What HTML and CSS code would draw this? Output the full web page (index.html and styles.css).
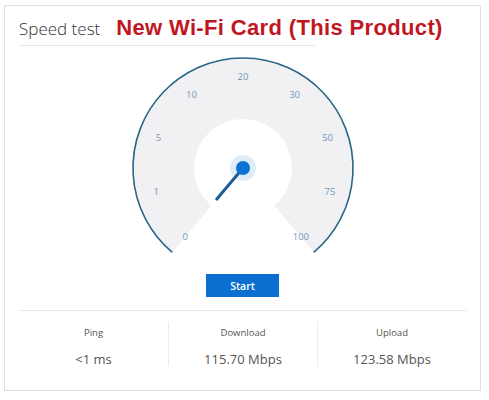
FILE: index.html
```html
<!DOCTYPE html>
<html>
<head>
<meta charset="utf-8">
<link rel="stylesheet" href="styles.css">
</head>
<body>
<div class="card">
  <div class="header">
    <span class="title">Speed test</span>
    <span class="tag">New Wi-Fi Card (This Product)</span>
  </div>
  <div class="rule"></div>
  <div class="gauge">
    <svg width="240" height="210" viewBox="0 0 240 210">
      <path d="M49.94 201.5 A109 109 0 1 1 190.06 201.5 L151.5 155.53 A49 49 0 1 0 88.5 155.53 Z" fill="#f1f0f3"/>
      <path d="M49.3 202.3 A110 110 0 1 1 190.7 202.3" fill="none" stroke="#2b6587" stroke-width="1.6"/>
      <g class="lbl" font-size="9.5" fill="#7598ba" text-anchor="middle" dominant-baseline="central">
        <text x="62.2" y="186.9">0</text>
        <text x="33.1" y="141.3">1</text>
        <text x="35.4" y="87.2">5</text>
        <text x="68.4" y="44.3">10</text>
        <text x="120" y="26">20</text>
        <text x="171.6" y="44.3">30</text>
        <text x="204.6" y="87.2">50</text>
        <text x="206.9" y="141.3">75</text>
        <text x="177.9" y="186.9">100</text>
      </g>
      <circle cx="120" cy="118" r="13" fill="#deecf8"/>
      <line x1="120" y1="118" x2="93" y2="150" stroke="#1d5c96" stroke-width="3"/>
      <circle cx="120" cy="118" r="7" fill="#0b72d3"/>
    </svg>
  </div>
  <div class="actions"><button class="start">Start</button></div>
  <div class="stats">
    <div class="stat"><div class="label">Ping</div><div class="value">&lt;1 ms</div></div>
    <div class="stat"><div class="label">Download</div><div class="value">115.70 Mbps</div></div>
    <div class="stat"><div class="label">Upload</div><div class="value">123.58 Mbps</div></div>
  </div>
</div>
</body>
</html>
```
FILE: styles.css
```css
html, body {
  margin: 0;
  background: #fff;
}
body {
  font-family: "Open Sans", "Noto Sans", sans-serif;
  color: #444;
}
.card {
  margin: 5px 0 0 4px;
  width: 477px;
  height: 386px;
  box-sizing: border-box;
  border: 1px solid #dfdfdf;
  padding: 0 14px;
}
.header {
  display: flex;
  align-items: baseline;
  padding-top: 12px;
  height: 26px;
}
.title {
  font-size: 17px;
  font-weight: 300;
  color: #333;
  line-height: 20px;
}
.tag {
  margin-left: 16px;
  font-family: "Liberation Sans", Arial, sans-serif;
  font-weight: bold;
  font-size: 22px;
  letter-spacing: 0.35px;
  color: #c1161f;
  line-height: 20px;
}
.rule {
  margin-top: 1px;
  width: 296px;
  height: 1px;
  background: #e6e6e6;
}
.gauge {
  display: flex;
  justify-content: center;
  margin-top: 4px;
  height: 210px;
}
.lbl {
  font-family: "Open Sans", sans-serif;
}
.actions {
  display: flex;
  justify-content: center;
  margin-top: 14px;
}
.start {
  width: 73px;
  height: 23px;
  border: none;
  background: #0b6fcf;
  color: #fff;
  font-family: "Open Sans", sans-serif;
  font-weight: 600;
  font-size: 10.5px;
  padding: 0;
}
.stats {
  margin-top: 13px;
  border-top: 1px solid #e8e8e8;
  display: grid;
  grid-template-columns: 1fr 1fr 1fr;
}
.stat {
  margin-top: 11px;
  height: 44px;
  text-align: center;
}
.stat + .stat {
  border-left: 1px solid #ececec;
}
.label {
  padding-top: 4px;
  font-size: 9.5px;
  line-height: 14px;
  color: #555;
}
.value {
  margin-top: 10px;
  font-size: 13px;
  line-height: 18px;
  color: #555;
}
```
